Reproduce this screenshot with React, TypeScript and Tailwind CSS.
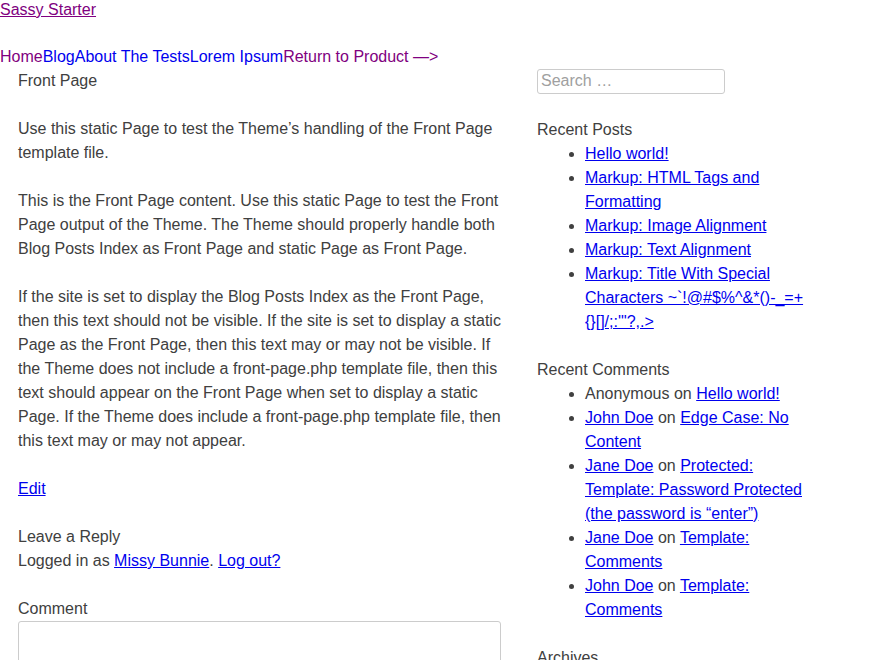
import React from "react";

const link = "text-[#0000ee] underline";

export default function App() {
  return (
    <div className="min-h-[660px] bg-white pt-px text-[16px] leading-6 text-[#404040] font-['Liberation_Sans',Arial,sans-serif]">
      <div className="h-[18px] leading-[18px]">
        <a href="#" className="text-[#800080] underline">Sassy Starter</a>
      </div>
      <nav className="mt-[26px] flex leading-6">
        <a href="#" className="text-[#800080]">Home</a>
        <a href="#" className="text-[#0000ee]">Blog</a>
        <a href="#" className="text-[#0000ee]">About The Tests</a>
        <a href="#" className="text-[#0000ee]">Lorem Ipsum</a>
        <a href="#" className="text-[#800080]">Return to Product —&gt;</a>
      </nav>
      <div className="flex">
        <main className="ml-[18px] w-[483px] shrink-0">
          <h1 className="mb-6">Front Page</h1>
          <p className="mb-6">Use this static Page to test the Theme’s handling of the Front Page template file.</p>
          <p className="mb-6">
            This is the Front Page content. Use this static Page to test the Front Page output of the Theme. The Theme
            should properly handle both Blog Posts Index as Front Page and static Page as Front Page.
          </p>
          <p className="mb-6">
            If the site is set to display the Blog Posts Index as the Front Page, then this text should not be visible.
            If the site is set to display a static Page as the Front Page, then this text may or may not be visible. If
            the Theme does not include a front-page.php template file, then this text should appear on the Front Page
            when set to display a static Page. If the Theme does include a front-page.php template file, then this text
            may or may not appear.
          </p>
          <div className="mb-6">
            <a href="#" className={link}>Edit</a>
          </div>
          <h3>Leave a Reply</h3>
          <p className="mb-6">
            Logged in as <a href="#" className={link}>Missy Bunnie</a>. <a href="#" className={link}>Log out?</a>
          </p>
          <label className="block">Comment</label>
          <textarea className="block h-[150px] w-[483px] resize-none rounded-[3px] border border-[#cccccc] bg-white" />
        </main>
        <aside className="ml-[36px] w-[285px] shrink-0">
          <div className="mb-[24px]">
            <input
              type="search"
              placeholder="Search …"
              className="block h-[25px] w-[188px] rounded-[3px] border border-[#cccccc] px-[3px] pb-[2px] text-[16px] leading-5 text-[#404040] placeholder:text-[#a0a0a0]"
            />
          </div>
          <section className="mb-6">
            <h2>Recent Posts</h2>
            <ul className="list-disc pl-12">
              <li><a href="#" className={link}>Hello world!</a></li>
              <li><a href="#" className={link}>Markup: HTML Tags and Formatting</a></li>
              <li><a href="#" className={link}>Markup: Image Alignment</a></li>
              <li><a href="#" className={link}>Markup: Text Alignment</a></li>
              <li>
                <a href="#" className={link}>
                  {"Markup: Title With Special Characters ~`!@#$%^&*()-_=+"}
                  <br />
                  {"{}[]/;:'\"?,.>"}
                </a>
              </li>
            </ul>
          </section>
          <section className="mb-6">
            <h2>Recent Comments</h2>
            <ul className="list-disc pl-12">
              <li>Anonymous on <a href="#" className={link}>Hello world!</a></li>
              <li><a href="#" className={link}>John Doe</a> on <a href="#" className={link}>Edge Case: No Content</a></li>
              <li><a href="#" className={link}>Jane Doe</a> on <a href="#" className={link}>Protected: Template: Password Protected (the password is “enter”)</a></li>
              <li><a href="#" className={link}>Jane Doe</a> on <a href="#" className={link}>Template: Comments</a></li>
              <li><a href="#" className={link}>John Doe</a> on <a href="#" className={link}>Template: Comments</a></li>
            </ul>
          </section>
          <section>
            <h2>Archives</h2>
          </section>
        </aside>
      </div>
    </div>
  );
}
